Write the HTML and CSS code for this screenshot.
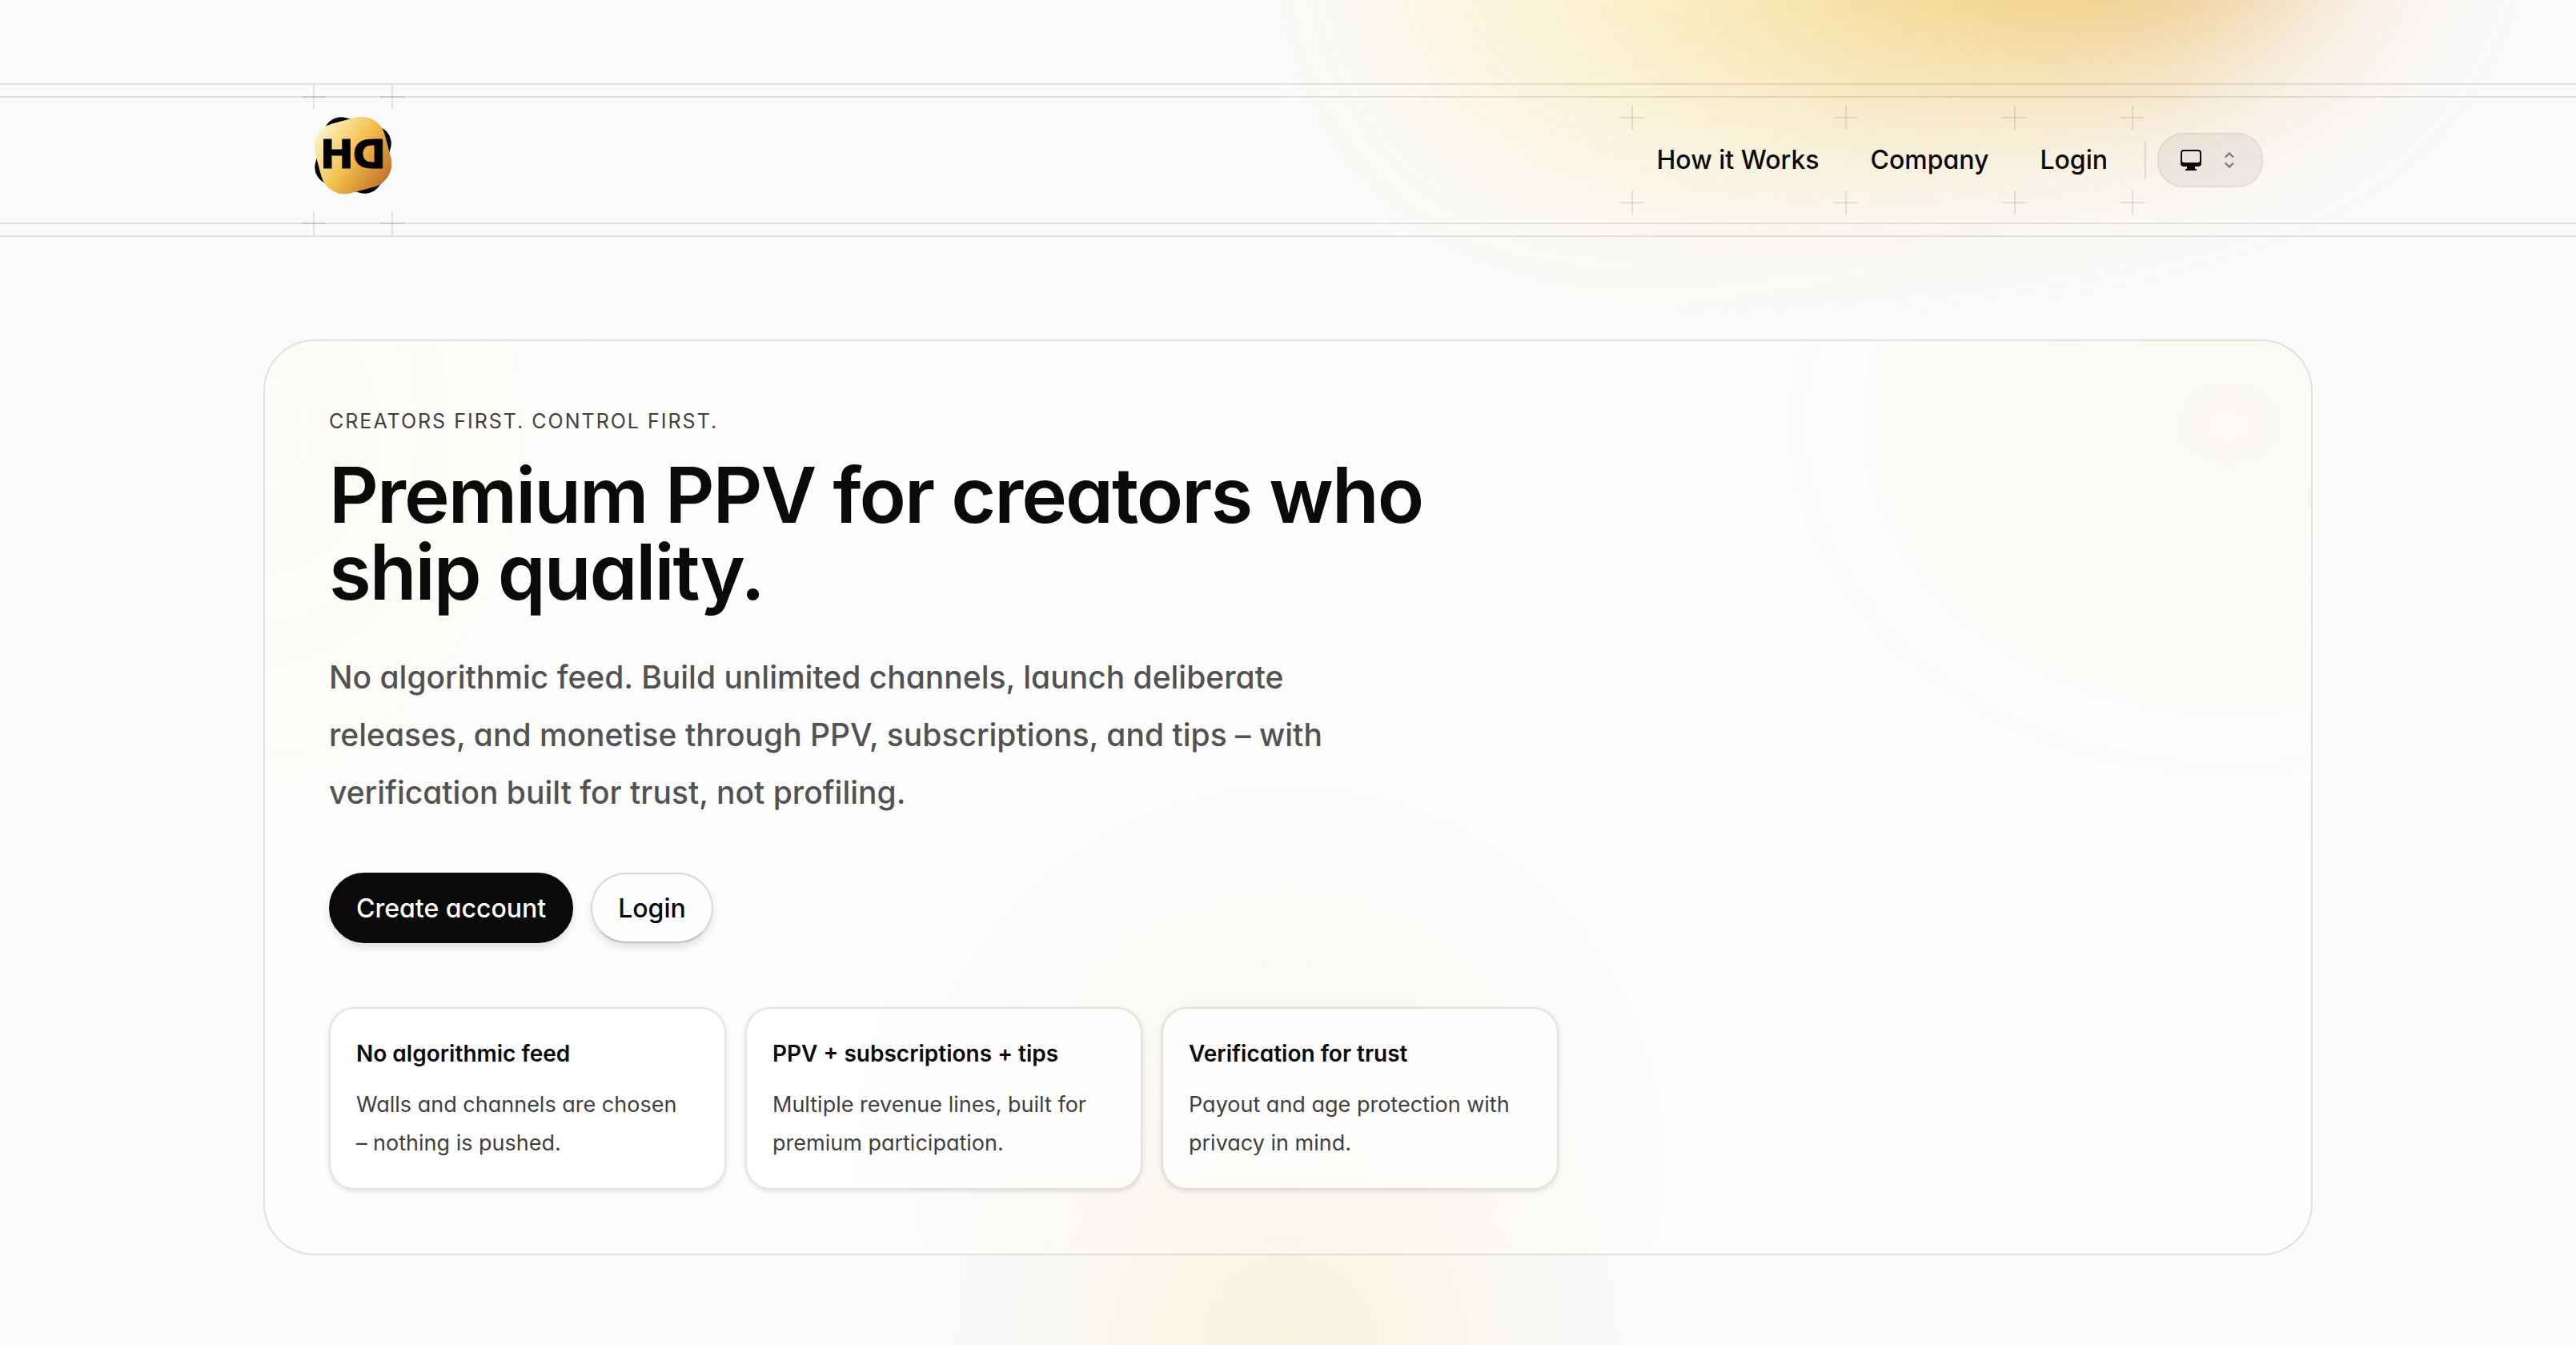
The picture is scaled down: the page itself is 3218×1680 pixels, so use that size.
FILE: index.html
```html
<!DOCTYPE html>
<html lang="en">
<head>
    <meta charset="UTF-8">
    <meta name="viewport" content="width=device-width, initial-scale=1">
    <title>Premium PPV for creators</title>
    <link rel="stylesheet" href="styles.css">
</head>
<body>
    <div class="page">
        <div class="glow-top"></div>
        <div class="glow-bottom"></div>

        <header class="header">
            <div class="header-inner">
                <div class="container">
                    <a class="logo" href="#" aria-label="Home">
                        <svg width="96" height="96" viewBox="0 0 96 96">
                            <defs>
                                <linearGradient id="gold" gradientUnits="userSpaceOnUse" x1="16" y1="10" x2="80" y2="86">
                                    <stop offset="0" stop-color="#fdf0c0"/>
                                    <stop offset="0.5" stop-color="#f2c14c"/>
                                    <stop offset="1" stop-color="#c9762c"/>
                                </linearGradient>
                            </defs>
                            <rect x="5" y="5" width="86" height="86" rx="22" transform="rotate(15 48 48)"/>
                            <rect x="3" y="3" width="90" height="90" rx="30" fill="url(#gold)" transform="rotate(-15 48 48)"/>
                            <g class="logo-text">
                                <text x="7" y="64">H</text>
                                <text transform="translate(89 64) scale(-1 1)">D</text>
                            </g>
                        </svg>
                        <span class="plus top left"></span>
                        <span class="plus top right"></span>
                        <span class="plus bottom left"></span>
                        <span class="plus bottom right"></span>
                    </a>

                    <nav class="nav">
                        <a class="nav-link" href="#how">How it Works
                            <span class="plus top left"></span>
                            <span class="plus bottom left"></span>
                        </a>
                        <a class="nav-link" href="#company">Company
                            <span class="plus top left"></span>
                            <span class="plus bottom left"></span>
                        </a>
                        <a class="nav-link" href="#login">Login
                            <span class="plus top left"></span>
                            <span class="plus bottom left"></span>
                            <span class="plus top right"></span>
                            <span class="plus bottom right"></span>
                        </a>
                        <span class="divider"></span>
                        <label class="theme">
                            <svg width="26" height="26" viewBox="0 0 26 26">
                                <path fill="currentColor" fill-rule="evenodd" d="M4 0H22A4 4 0 0 1 26 4V17A4 4 0 0 1 22 21H18V23.500L20 24.500V26H6V24.500L8 23.500V21H4A4 4 0 0 1 0 17V4A4 4 0 0 1 4 0ZM4 2A2 2 0 0 0 2 4V14A2 2 0 0 0 4 16H22A2 2 0 0 0 24 14V4A2 2 0 0 0 22 2Z"/>
                            </svg>
                            <svg class="chevrons" width="12" height="20" viewBox="0 0 12 20">
                                <path fill="none" stroke="currentColor" stroke-width="2" d="M0.800 6.500L6 1.500L11.200 6.500M0.800 13.500L6 18.500L11.200 13.500"/>
                            </svg>
                            <select class="theme-select" aria-label="Theme">
                                <option>System</option>
                                <option>Light</option>
                                <option>Dark</option>
                            </select>
                        </label>
                    </nav>
                </div>
            </div>
        </header>

        <main class="hero">
            <p class="eyebrow">Creators first. Control first.</p>
            <h1>Premium PPV for creators who ship quality.</h1>
            <p class="lead">No algorithmic feed. Build unlimited channels, launch deliberate releases, and monetise through PPV, subscriptions, and tips – with verification built for trust, not profiling.</p>
            <div class="actions">
                <button class="btn btn-dark" type="button">Create account</button>
                <button class="btn" type="button">Login</button>
            </div>
            <div class="features">
                <section class="feature">
                    <h2>No algorithmic feed</h2>
                    <p>Walls and channels are chosen – nothing is pushed.</p>
                </section>
                <section class="feature">
                    <h2>PPV + subscriptions + tips</h2>
                    <p>Multiple revenue lines, built for premium participation.</p>
                </section>
                <section class="feature">
                    <h2>Verification for trust</h2>
                    <p>Payout and age protection with privacy in mind.</p>
                </section>
            </div>
        </main>
    </div>
</body>
</html>
```
FILE: styles.css
```css
* {
    box-sizing: border-box;
}

body, h1, h2, p {
    margin: 0;
}

body {
    background: #fafafa;
    color: #0a0a0a;
    font-family: Inter, "Liberation Sans", sans-serif;
    font-feature-settings: "cv11";
}

.page {
    position: relative;
    min-height: 100vh;
    padding: 104px 64px 112px;
    overflow: hidden;
    isolation: isolate;
}

/* background glows */
.glow-top {
    position: absolute;
    z-index: -1;
    top: -352px;
    left: calc(50% + 144px);
    width: 1152px;
    height: 480px;
    border-radius: 240px;
    background: linear-gradient(115deg, #fcf2ca 28%, #f1c258 70%, #de9a52);
    filter: blur(128px);
    opacity: 0.9;
    transform: rotate(-10deg);
}

.glow-bottom {
    position: absolute;
    z-index: -1;
    left: 50%;
    bottom: -480px;
    width: 960px;
    height: 960px;
    transform: translateX(-50%);
    background: radial-gradient(closest-side, rgba(243, 226, 150, 0.24), rgba(245, 226, 160, 0.16) 40%, rgba(240, 222, 195, 0.05) 75%, transparent);
}

/* header */
.header {
    margin: 0 -64px;
    padding: 14px 0;
    border-top: 2px solid rgba(10, 10, 10, 0.1);
    border-bottom: 2px solid rgba(10, 10, 10, 0.1);
}

.header-inner {
    border-top: 2px solid rgba(10, 10, 10, 0.1);
    border-bottom: 2px solid rgba(10, 10, 10, 0.1);
}

.container {
    display: flex;
    align-items: center;
    justify-content: space-between;
    max-width: 2560px;
    margin: 0 auto;
    padding: 0 62px;
}

.logo {
    position: relative;
    display: block;
    margin: -2px 0;
    padding: 26px 2px 38px;
}

.logo svg {
    display: block;
}

.logo-text {
    font-family: "DejaVu Sans", sans-serif;
    font-size: 50px;
    font-weight: 700;
    stroke: #000;
    stroke-width: 1px;
    stroke-linejoin: round;
}

.nav {
    display: flex;
    align-items: center;
}

.nav-link {
    position: relative;
    padding: 34px 32px;
    color: inherit;
    font-size: 32px;
    font-weight: 500;
    line-height: 40px;
    text-decoration: none;
}

/* small cross marks on the corners */
.plus {
    position: absolute;
    width: 30px;
    height: 30px;
    background:
        linear-gradient(rgba(10, 10, 10, 0.1), rgba(10, 10, 10, 0.1)) center / 2px 30px no-repeat,
        linear-gradient(rgba(10, 10, 10, 0.1), rgba(10, 10, 10, 0.1)) center / 30px 2px no-repeat;
}

.top { top: -14px; }
.bottom { bottom: -14px; }
.left { left: -14px; }
.right { right: -14px; }

.divider {
    width: 2px;
    height: 48px;
    margin: 0 14px;
    background: rgba(10, 10, 10, 0.1);
}

.theme {
    position: relative;
    display: flex;
    align-items: center;
    gap: 29px;
    height: 68px;
    padding: 0 34px 0 27px;
    border: 2px solid rgba(10, 10, 10, 0.05);
    border-radius: 32px;
    background: rgba(10, 10, 10, 0.06);
}

.chevrons {
    color: #737373;
}

.theme-select {
    position: absolute;
    inset: 0;
    width: 100%;
    border: 0;
    background: none;
    color: transparent;
    appearance: none;
    cursor: pointer;
}

/* hero */
.hero {
    max-width: 2560px;
    margin: 128px auto 0;
    padding: 80px;
    border: 2px solid rgba(10, 10, 10, 0.1);
    border-radius: 64px;
    background:
        radial-gradient(700px 560px at 96% 9%, rgba(235, 200, 110, 0.07), transparent),
        radial-gradient(560px 700px at 0 10%, rgba(250, 225, 130, 0.06), transparent),
        radial-gradient(580px 580px at 50% 90%, rgba(215, 180, 110, 0.08), transparent),
        rgba(255, 255, 255, 0.6);
    background-clip: padding-box;
}

.eyebrow {
    color: #404040;
    font-size: 25px;
    line-height: 40px;
    letter-spacing: 2px;
    text-transform: uppercase;
}

h1 {
    max-width: 1440px;
    margin-top: 24px;
    font-size: 96px;
    font-weight: 600;
    line-height: 96px;
    letter-spacing: -2px;
}

.lead {
    max-width: 1344px;
    margin-top: 48px;
    color: #525252;
    font-size: 39px;
    font-weight: 500;
    line-height: 72px;
}

.actions {
    display: flex;
    gap: 22px;
    margin-top: 64px;
}

.btn {
    height: 88px;
    padding: 0 32px;
    border: 2px solid rgba(10, 10, 10, 0.15);
    border-bottom-color: rgba(10, 10, 10, 0.25);
    border-radius: 44px;
    background: #fefefe;
    box-shadow: 0 6px 12px -2px rgba(0, 0, 0, 0.14);
    color: #0a0a0a;
    font: inherit;
    font-size: 32px;
    font-weight: 500;
    cursor: pointer;
}

.btn-dark {
    border-color: #0a0a0a;
    background: #0a0a0a;
    color: #fff;
}

.features {
    display: grid;
    grid-template-columns: repeat(3, 1fr);
    gap: 24px;
    max-width: 1536px;
    margin-top: 80px;
}

.feature {
    padding: 32px;
    border: 2px solid rgba(10, 10, 10, 0.1);
    border-radius: 32px;
    background: rgba(255, 255, 255, 0.7);
    background-clip: padding-box;
    box-shadow: 0 2px 6px rgba(0, 0, 0, 0.12);
    font-size: 27px;
    line-height: 48px;
}

.feature h2 {
    font-size: 28px;
    font-weight: 600;
}

.feature p {
    margin-top: 16px;
    padding-right: 16px;
    color: #404040;
}
```
